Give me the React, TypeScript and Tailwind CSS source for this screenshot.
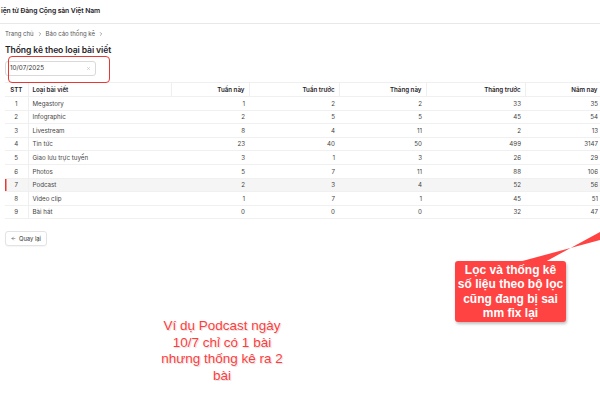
import { ChevronRight, X, ArrowLeft } from "lucide-react";

interface Row {
  stt: number;
  name: string;
  vals: number[];
}

const rows: Row[] = [
  { stt: 1, name: "Megastory", vals: [1, 2, 2, 33, 35] },
  { stt: 2, name: "Infographic", vals: [2, 5, 5, 45, 54] },
  { stt: 3, name: "Livestream", vals: [8, 4, 11, 2, 13] },
  { stt: 4, name: "Tin tức", vals: [23, 40, 50, 499, 3147] },
  { stt: 5, name: "Giao lưu trực tuyến", vals: [3, 1, 3, 26, 29] },
  { stt: 6, name: "Photos", vals: [5, 7, 11, 88, 106] },
  { stt: 7, name: "Podcast", vals: [2, 3, 4, 52, 56] },
  { stt: 8, name: "Video clip", vals: [1, 7, 1, 45, 51] },
  { stt: 9, name: "Bài hát", vals: [0, 0, 0, 32, 47] },
];

const cols = ["Tuần này", "Tuần trước", "Tháng này", "Tháng trước", "Năm nay"];
const widths = ["w-[78px]", "w-[90px]", "w-[87px]", "w-[99px]", "w-[77px]"];

export default function App() {
  return (
    <div className="relative h-[400px] w-[600px] overflow-hidden bg-white font-['Inter',sans-serif] text-[#1f2328]">
      {/* top bar */}
      <div className="flex h-[24px] items-center border-b border-[#e8e8e8] pl-[1px] text-[6.8px] font-semibold tracking-[-0.1px]">
        iện tử Đảng Cộng sản Việt Nam
      </div>

      <div className="pl-[5px]">
        {/* breadcrumb */}
        <div className="mt-[5px] flex items-center gap-[3px] text-[6px] text-[#555]">
          <span>Trang chủ</span>
          <ChevronRight className="h-[6px] w-[6px]" strokeWidth={2} />
          <span>Báo cáo thống kê</span>
          <ChevronRight className="h-[6px] w-[6px]" strokeWidth={2} />
        </div>

        <h1 className="mt-[7px] text-[8.6px] font-semibold leading-[11px] tracking-[-0.1px]">
          Thống kê theo loại bài viết
        </h1>

        {/* date filter */}
        <div className="mt-[5px] flex h-[15px] w-[91px] items-center justify-between rounded-[3px] border border-[#d9d9d9] pl-[4px] pr-[4px] text-[6.3px] text-[#333]">
          <span>10/07/2025</span>
          <X className="h-[5px] w-[5px] text-[#aaa]" strokeWidth={2} />
        </div>

        {/* table */}
        <table className="mt-[6px] w-[597px] table-fixed border-collapse text-[6.2px]">
          <thead>
            <tr className="h-[14px] border-t border-[#efefef]">
              <th className="w-[23px] border-r border-[#efefef] text-center font-semibold">STT</th>
              <th className="w-[143px] border-r border-[#efefef] pl-[4px] text-left font-semibold">Loại bài viết</th>
              {cols.map((c, i) => (
                <th
                  key={c}
                  className={`${widths[i]} border-r border-[#efefef] pr-[4px] text-right font-semibold`}
                >
                  {c}
                </th>
              ))}
            </tr>
          </thead>
          <tbody className="text-[#444]">
            {rows.map((r) => {
              const hl = r.stt === 7;
              return (
                <tr
                  key={r.stt}
                  className={`h-[13.6px] border-t border-[#f0f0f0] ${hl ? "bg-[#f5f5f5]" : ""}`}
                >
                  <td
                    className={`border-r border-[#efefef] text-center ${hl ? "shadow-[inset_1.5px_0_0_#e53935]" : ""}`}
                  >
                    {r.stt}
                  </td>
                  <td className="pl-[4px]">{r.name}</td>
                  {r.vals.map((v, i) => (
                    <td key={i} className="pr-[4px] text-right">
                      {v}
                    </td>
                  ))}
                </tr>
              );
            })}
            <tr className="h-0 border-t border-[#f0f0f0]">
              <td colSpan={7} />
            </tr>
          </tbody>
        </table>

        {/* back button */}
        <button className="mt-[12px] flex h-[15px] items-center gap-[3px] rounded-[3px] border border-[#e3e3e3] px-[5px] text-[5.8px] text-[#333] shadow-[0_1px_1px_rgba(0,0,0,0.04)]">
          <ArrowLeft className="h-[5px] w-[5px]" strokeWidth={2} />
          Quay lại
        </button>
      </div>

      {/* red highlight around filter */}
      <div className="absolute left-[8px] top-[56px] h-[27px] w-[102px] rounded-[4px] border-[1.5px] border-[#e53935]" />

      {/* annotation text */}
      <div className="absolute left-[152px] top-[318px] w-[140px] text-center font-['Liberation_Sans',sans-serif] text-[13.5px] leading-[16.5px] text-[#ff3b3b] [text-shadow:0_0_1px_#fff,1px_1px_1px_rgba(0,0,0,0.15)]">
        Ví dụ Podcast ngày 10/7 chỉ có 1 bài nhưng thống kê ra 2 bài
      </div>

      {/* callout */}
      <svg className="absolute left-[515px] top-[232px]" width="85" height="40" viewBox="0 0 85 40">
        <polygon points="0,31 28,31 85,0 85,8" fill="#ff4343" />
      </svg>
      <div className="absolute left-[455px] top-[261px] flex h-[61px] w-[111px] items-center justify-center rounded-[3px] bg-[#ff4343] text-center font-['Liberation_Sans',sans-serif] text-[12px] font-bold leading-[14.5px] text-white shadow-[1px_2px_3px_rgba(0,0,0,0.25)]">
        Lọc và thống kê
        <br />
        số liệu theo bộ lọc
        <br />
        cũng đang bị sai
        <br />
        mm fix lại
      </div>
    </div>
  );
}
